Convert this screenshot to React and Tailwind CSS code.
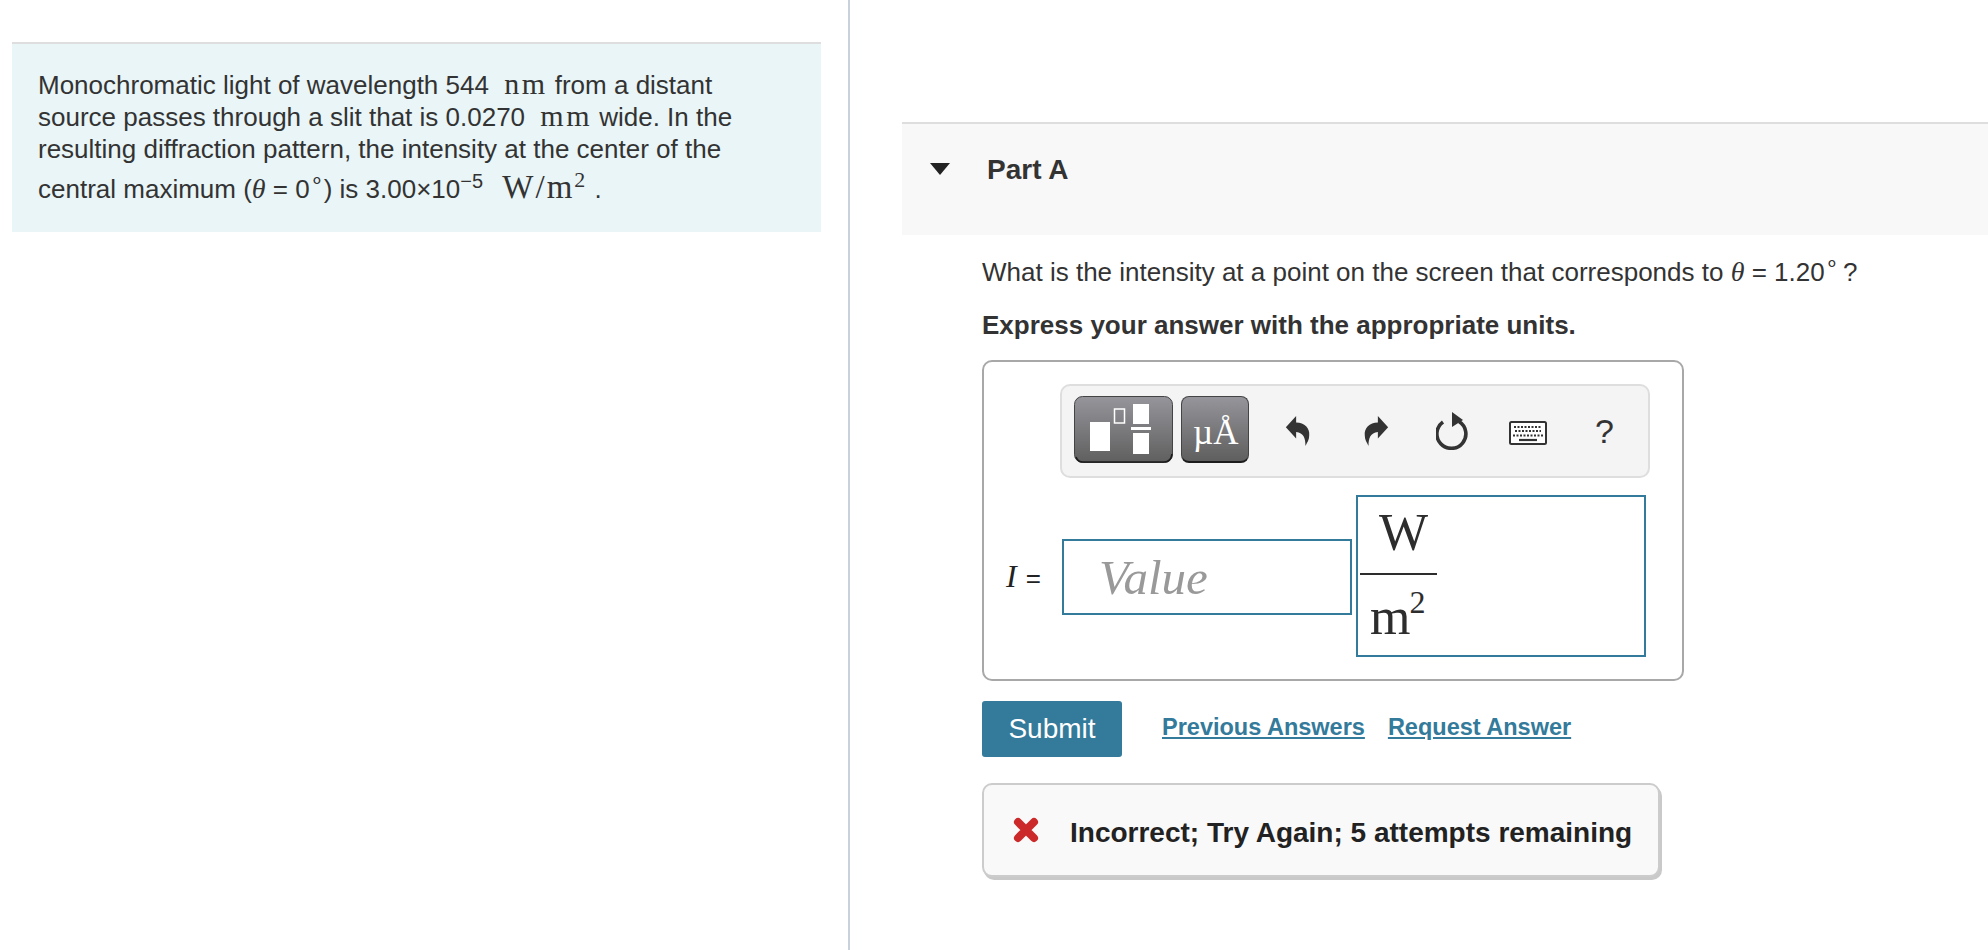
import React from "react";

const sans = "font-['Liberation_Sans',Arial,sans-serif]";
const serif = "font-['Liberation_Serif','Times_New_Roman',serif]";

function Unit({ children, className = "" }) {
  return <span className={`${serif} leading-none ${className}`}>{children}</span>;
}

function Theta() {
  return <i className={`${serif} text-[28px] leading-none`}>θ</i>;
}

function Templates() {
  return (
    <svg width="99" height="67" viewBox="0 0 99 67" className="block">
      <defs>
        <linearGradient id="btn1" x1="0" y1="0" x2="0" y2="1">
          <stop offset="0" stopColor="#96959b" />
          <stop offset="1" stopColor="#5f5f5f" />
        </linearGradient>
      </defs>
      <rect x="0.5" y="0.5" width="98" height="66" rx="8" fill="url(#btn1)" stroke="#444" />
      <path d="M2 61 Q4 66 9 66 H90 Q97 66 98 58" fill="none" stroke="#1c1c1c" strokeWidth="1.6" />
      <rect x="16" y="26" width="20" height="29" fill="#fff" />
      <rect x="40.500" y="13" width="10" height="14" fill="none" stroke="#fff" strokeWidth="1.5" />
      <rect x="59" y="8" width="16" height="20" fill="#fff" />
      <rect x="57" y="31" width="20" height="3" fill="#fff" />
      <rect x="59" y="37" width="16" height="21" fill="#fff" />
    </svg>
  );
}

function Undo({ flip }) {
  return (
    <svg width="28" height="32" viewBox="0 0 30 34" className={flip ? "block -scale-x-100" : "block"}>
      <path d="M2 13 L13 1 V8 C22 8 28 14 27 22 C27 26 25 29 23 33 C23 24 21 19 13 18 V25 Z" fill="#333" />
    </svg>
  );
}

function Reset() {
  return (
    <svg width="34" height="38" viewBox="0 0 34 38" className="block">
      <path d="M23 9.500 A14.500 14.500 0 1 1 7 10" fill="none" stroke="#333" strokeWidth="3.600" />
      <path d="M16 0 L27 8 L16 15 Z" fill="#333" />
    </svg>
  );
}

function Keyboard() {
  return (
    <svg width="38" height="24" viewBox="0 0 38 24" className="block">
      <rect x="1" y="1" width="36" height="22" rx="1.5" fill="#fff" stroke="#333" strokeWidth="2" />
      <path d="M5 6 H33 M6 10 H32" stroke="#333" strokeWidth="2.200" strokeDasharray="2 1.500" />
      <path d="M4 14.500 H34" stroke="#333" strokeWidth="2" strokeDasharray="2 1.500" />
      <path d="M10 19 H28" stroke="#333" strokeWidth="2.200" />
    </svg>
  );
}

function Toolbar() {
  return (
    <div className="ml-[76px] w-[590px] h-[94px] rounded-[10px] border-2 border-[#dedede] bg-[#f4f4f4] flex items-center pl-[12px]">
      <div className="mb-[3px]"><Templates /></div>
      <div className={`relative mb-[3px] ml-2 w-[68px] h-[67px] rounded-lg border border-[#444] border-b-2 border-b-[#1c1c1c] bg-gradient-to-b from-[#96959b] to-[#5f5f5f] text-white ${serif}`}>
        <span className="absolute left-[11px] bottom-[11px] text-[35px] leading-none whitespace-nowrap">
          µÅ
        </span>
      </div>
      <div className="ml-[35px]"><Undo /></div>
      <div className="ml-[50px]"><Undo flip /></div>
      <div className="ml-[46px]"><Reset /></div>
      <div className="ml-[39px] mt-1"><Keyboard /></div>
      <span className={`ml-[48px] text-[34px] leading-none text-[#333] ${sans}`}>?</span>
    </div>
  );
}

function AnswerRow() {
  return (
    <div className="mt-[17px] ml-[22px] flex items-center">
      <span className={`text-[26px] leading-none text-[#222] w-[56px] whitespace-nowrap ${sans}`}>
        <i className={`${serif} text-[32px]`}>I</i><span className="ml-[9px]">=</span>
      </span>
      <div className="mt-[2px] w-[290px] h-[76px] border-2 border-[#337a9b] flex items-center pl-[35px]">
        <i className={`${serif} text-[49px] leading-none text-[#999]`}>Value</i>
      </div>
      <div className={`ml-1 w-[290px] h-[162px] border-2 border-[#337a9b] pl-[2px] text-[#2d2d2d] ${serif}`}>
        <div className="w-[77px]">
          <div className="h-[76px] pt-[6px] pl-[19px] text-[52px] leading-[60px]">W</div>
          <div className="w-[77px] h-[2px] bg-[#2d2d2d]" />
          <div className="mt-[12px] pl-[10px] text-[52px] leading-[60px] whitespace-nowrap">
            m<sup className="text-[32px] leading-none align-[5px] ml-[-1px]">2</sup>
          </div>
        </div>
      </div>
    </div>
  );
}

export default function App() {
  return (
    <div className={`flex h-[950px] overflow-hidden bg-white text-[#333] ${sans}`}>
      {/* left column with the problem statement */}
      <div className="w-[850px] shrink-0 border-r-2 border-[#c9d2dc] pt-[42px] pl-3 pr-[27px]">
        <div className="h-[190px] border-t-2 border-[#dedede] bg-[#e9f5f7] pl-[26px] pt-[25px] text-[26px] leading-[32px]">
          <p>Monochromatic light of wavelength 544 <Unit className="ml-2 text-[30px] tracking-[2.500px]">nm</Unit> from a distant</p>
          <p>source passes through a slit that is 0.0270 <Unit className="ml-2 text-[30px] tracking-[2.500px]">mm</Unit> wide. In the</p>
          <p>resulting diffraction pattern, the intensity at the center of the</p>
          <p className="mt-1.5">
            central maximum (<Theta /> = 0<sup className="text-[22px] leading-none">∘</sup>) is 3.00×10<sup className="text-[20px] leading-none">−5</sup>{" "}
            <Unit className="ml-3 text-[33px] tracking-[2px]">W/m<sup className="text-[22px] leading-none">2</sup></Unit> .
          </p>
        </div>
      </div>

      {/* right column with part A */}
      <div className="flex-1 min-w-0 pt-[122px] pl-[52px]">
        <div className="h-[113px] border-t-2 border-[#dedede] bg-[#f8f8f8] flex items-start pt-[28px] pl-[28px]">
          <svg width="20" height="14" viewBox="0 0 20 14" className="mt-[10px] block">
            <path d="M0 1 H20 L10 13 Z" fill="#222" />
          </svg>
          <span className="ml-[37px] text-[28px] leading-[36px] font-bold text-[#333]">Part A</span>
        </div>

        <div className="pl-[80px]">
          <p className="mt-[21px] text-[26px] leading-[32px] whitespace-nowrap">
            What is the intensity at a point on the screen that corresponds to <Theta /> = 1.20<sup className="text-[22px] leading-none">∘</sup><span className="-ml-[3px]"> ?</span>
          </p>
          <p className="mt-[21px] text-[26px] leading-[32px] font-bold">Express your answer with the appropriate units.</p>

          <div className="mt-[19px] w-[702px] h-[321px] rounded-[10px] border-2 border-[#a8a8a8] pt-[22px]">
            <Toolbar />
            <AnswerRow />
          </div>

          <div className="mt-[20px] flex items-start">
            <button className="w-[140px] h-[56px] rounded-[3px] bg-[#337a9b] text-white text-[28px]">Submit</button>
            <a className="ml-10 mt-[10px] text-[23.500px] leading-[32px] font-bold text-[#337a9b] underline">Previous Answers</a>
            <a className="ml-[23px] mt-[10px] text-[23.500px] leading-[32px] font-bold text-[#337a9b] underline">Request Answer</a>
          </div>

          <div className="mt-[26px] w-[678px] h-[94px] rounded-[10px] border-2 border-[#cccccc] bg-[#f9f9f9] shadow-[2px_3px_0_#c9c9c9] flex items-center pl-[28px]">
            <svg width="28" height="28" viewBox="0 0 28 28" className="block">
              <path d="M6 6 L22 22 M22 6 L6 22" stroke="#cc2a2a" strokeWidth="8" strokeLinecap="round" />
            </svg>
            <span className="ml-[30px] mt-[5px] text-[28px] font-bold text-[#222] whitespace-nowrap">Incorrect; Try Again; 5 attempts remaining</span>
          </div>
        </div>
      </div>
    </div>
  );
}
